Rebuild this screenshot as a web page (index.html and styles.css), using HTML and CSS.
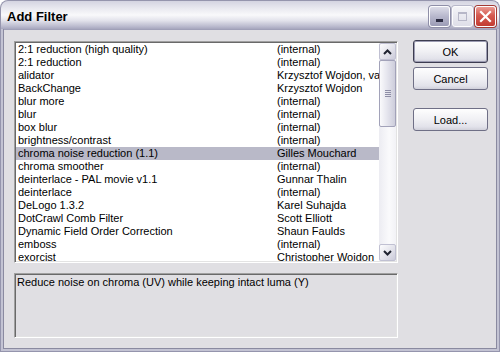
FILE: index.html
```html
<!DOCTYPE html>
<html>
<head>
<meta charset="utf-8">
<link rel="stylesheet" href="styles.css">
</head>
<body>
<div class="window">
  <div class="titlebar">
    <span class="title">Add Filter</span>
    <div class="caption-buttons">
      <div class="cap-btn cap-min"><span class="min-glyph"></span></div>
      <div class="cap-btn cap-max"><span class="max-glyph"></span></div>
      <div class="cap-btn cap-close">
        <svg width="19" height="19" viewBox="0 0 19 19"><path d="M5 5 L14 14 M14 5 L5 14" stroke="#fff" stroke-width="2.2" fill="none" stroke-linecap="square"/></svg>
      </div>
    </div>
  </div>
  <div class="frame">
    <div class="client">
      <div class="listbox sunken">
        <div class="rows">
          <div class="row"><span>2:1 reduction (high quality)</span><span>(internal)</span></div>
          <div class="row"><span>2:1 reduction</span><span>(internal)</span></div>
          <div class="row"><span>alidator</span><span>Krzysztof Wojdon, various</span></div>
          <div class="row"><span>BackChange</span><span>Krzysztof Wojdon</span></div>
          <div class="row"><span>blur more</span><span>(internal)</span></div>
          <div class="row"><span>blur</span><span>(internal)</span></div>
          <div class="row"><span>box blur</span><span>(internal)</span></div>
          <div class="row"><span>brightness/contrast</span><span>(internal)</span></div>
          <div class="row selected"><span>chroma noise reduction (1.1)</span><span>Gilles Mouchard</span></div>
          <div class="row"><span>chroma smoother</span><span>(internal)</span></div>
          <div class="row"><span>deinterlace - PAL movie v1.1</span><span>Gunnar Thalin</span></div>
          <div class="row"><span>deinterlace</span><span>(internal)</span></div>
          <div class="row"><span>DeLogo 1.3.2</span><span>Karel Suhajda</span></div>
          <div class="row"><span>DotCrawl Comb Filter</span><span>Scott Elliott</span></div>
          <div class="row"><span>Dynamic Field Order Correction</span><span>Shaun Faulds</span></div>
          <div class="row"><span>emboss</span><span>(internal)</span></div>
          <div class="row"><span>exorcist</span><span>Christopher Woidon</span></div>
        </div>
        <div class="scrollbar">
          <div class="sb-btn">
            <svg width="9" height="6" viewBox="0 0 9 6"><path d="M1 5 L4.5 1.5 L8 5" stroke="#1f2330" stroke-width="2" fill="none"/></svg>
          </div>
          <div class="sb-thumb">
            <span class="grip"></span><span class="grip"></span><span class="grip"></span><span class="grip"></span>
          </div>
          <div class="sb-track"></div>
          <div class="sb-btn">
            <svg width="9" height="6" viewBox="0 0 9 6"><path d="M1 1 L4.5 4.5 L8 1" stroke="#1f2330" stroke-width="2" fill="none"/></svg>
          </div>
        </div>
      </div>
      <div class="buttons">
        <div class="btn btn-default">OK</div>
        <div class="btn">Cancel</div>
        <div class="btn btn-load">Load...</div>
      </div>
      <div class="desc sunken">Reduce noise on chroma (UV) while keeping intact luma (Y)</div>
    </div>
  </div>
</div>
</body>
</html>
```
FILE: styles.css
```css
html, body {
  margin: 0;
  padding: 0;
  background: #ffffff;
}
body {
  font-family: "Liberation Sans", Arial, sans-serif;
  font-size: 11px;
  color: #000;
}
.window {
  width: 500px;
  height: 352px;
  display: flex;
  flex-direction: column;
}
.titlebar {
  height: 29px;
  box-sizing: border-box;
  border: 1px solid #9595ad;
  border-bottom: none;
  border-radius: 8px 8px 0 0;
  background: linear-gradient(#d4d4e1 0%, #e8e8ef 25%, #f9f9fb 50%, #e2e2eb 70%, #b8b8cc 92%, #a6a6bd 100%);
  display: flex;
  align-items: center;
  justify-content: space-between;
  padding: 0 3px 0 6px;
}
.title {
  font-family: "Liberation Sans", Arial, sans-serif;
  font-weight: bold;
  font-size: 13px;
  color: #000;
  margin-top: 2px;
}
.caption-buttons {
  display: flex;
  gap: 2px;
  margin-top: 2px;
}
.cap-btn {
  width: 21px;
  height: 21px;
  box-sizing: border-box;
  border: 1px solid #fdfdfe;
  border-radius: 3px;
  position: relative;
  display: flex;
  align-items: center;
  justify-content: center;
}
.cap-min {
  background: linear-gradient(#dcdce8, #b7b7cc 50%, #9c9cb6);
  box-shadow: 0 0 0 1px #8f8fa8;
}
.min-glyph {
  position: absolute;
  left: 6px;
  bottom: 4px;
  width: 7px;
  height: 3px;
  background: #2c2c42;
}
.cap-max {
  background: linear-gradient(#f4f4f8, #dedee8);
  box-shadow: 0 0 0 1px #b8b8ca;
}
.max-glyph {
  width: 9px;
  height: 9px;
  box-sizing: border-box;
  border: 1px solid #b7b7c8;
  border-top-width: 2px;
}
.cap-close {
  background: linear-gradient(#ea9a92, #d55a50 45%, #c23c32);
  box-shadow: 0 0 0 1px #a33a34;
}
.frame {
  flex: 1;
  display: flex;
  box-sizing: border-box;
  border: 1px solid #9595ad;
  border-top: none;
  background: #c3c3d3;
  padding: 0 2px 2px 2px;
}
.client {
  flex: 1;
  background: #e0dfe3;
  box-shadow: inset 1px 0 #8a8aa0, inset -1px 0 #8a8aa0, inset 0 -1px #8a8aa0, inset 0 1px #a0a0b8;
  display: grid;
  grid-template-columns: 384px 75px;
  grid-template-rows: 222px 65px;
  column-gap: 15px;
  row-gap: 10px;
  padding: 12px 9px 10px 11px;
  align-content: start;
}
.sunken {
  box-sizing: border-box;
  border: 1px solid;
  border-color: #a0a0a0 #ffffff #ffffff #a0a0a0;
  box-shadow: inset 1px 1px #696969, inset -1px -1px #e3e3e3;
  padding: 1px;
}
.listbox {
  background: #ffffff;
  display: flex;
  overflow: hidden;
}
.rows {
  flex: 1;
  overflow: hidden;
}
.row {
  height: 13px;
  line-height: 13px;
  display: grid;
  grid-template-columns: 259px 1fr;
  padding-left: 2px;
  white-space: nowrap;
  overflow: hidden;
}
.row span {
  overflow: hidden;
}
.row.selected {
  background: #b9b9c8;
}
.scrollbar {
  width: 17px;
  display: flex;
  flex-direction: column;
  background: linear-gradient(to right, #ececf2, #fafafc 60%, #f2f2f6);
}
.sb-btn {
  height: 17px;
  box-sizing: border-box;
  border: 1px solid #c0c0d2;
  border-radius: 2px;
  background: linear-gradient(to bottom right, #fdfdfe, #e0e0e9 60%, #cbcbda);
  display: flex;
  align-items: center;
  justify-content: center;
}
.sb-thumb {
  height: 67px;
  box-sizing: border-box;
  border: 1px solid #a2a2b9;
  border-radius: 2px;
  background: linear-gradient(to right, #fafafc, #e4e4ed 50%, #cdcddb);
  display: flex;
  flex-direction: column;
  align-items: center;
  justify-content: center;
  gap: 1px;
}
.grip {
  width: 6px;
  height: 1px;
  background: #8e8ea6;
}
.sb-track {
  flex: 1;
}
.buttons {
  display: flex;
  flex-direction: column;
  margin-top: -1px;
}
.btn {
  height: 23px;
  box-sizing: border-box;
  border: 1px solid #6f6f86;
  border-radius: 3px;
  background: linear-gradient(#fefefe, #f0f0f4 50%, #e2e2ea 85%, #d0d0da);
  display: flex;
  align-items: center;
  justify-content: center;
  margin-bottom: 4px;
}
.btn-default {
  border-color: #3c3c50;
  box-shadow: inset 0 0 0 1px #9c9cb2;
}
.btn-load {
  margin-top: 14px;
}
.desc {
  grid-column: 1;
  background: #e0dfe3;
  padding: 2px 2px;
  line-height: 13px;
}
```
